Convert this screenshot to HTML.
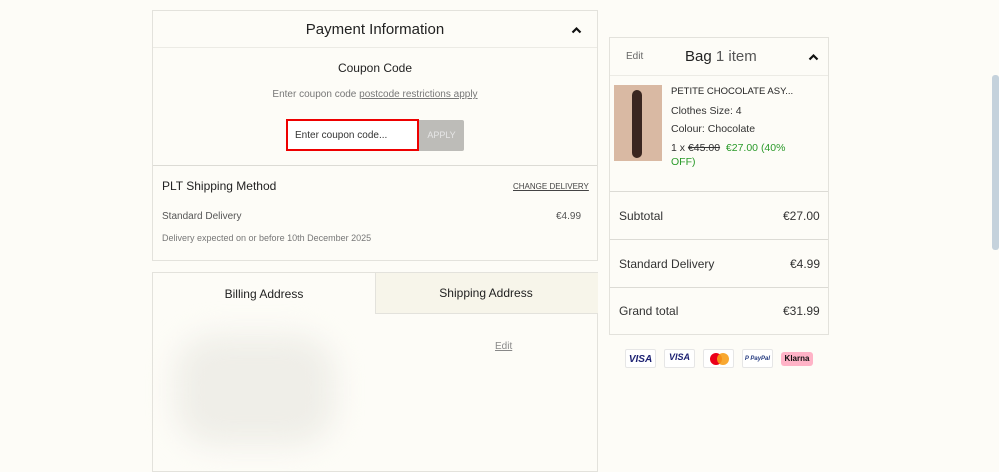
<!DOCTYPE html>
<html><head><style>
body{margin:0;width:999px;height:462px;background:#fdfcf7;font-family:"Liberation Sans",sans-serif;color:#222;position:relative;overflow:hidden}
.a{position:absolute}
.box{position:absolute;border:1px solid #e3e2dc;box-sizing:border-box}
.hl{position:absolute;height:1px;background:#dcdbd5}
.t{position:absolute;white-space:nowrap}
.pi{position:absolute;top:349px;width:31px;height:19px;border:1px solid #e6e6e6;background:#fff;border-radius:2px;font-size:9px;font-weight:bold;font-style:italic;color:#1a1f71;text-align:center;line-height:19px;box-sizing:border-box}
</style></head><body>
<div class="box" style="left:152px;top:10px;width:446px;height:251px"></div>
<div class="hl" style="left:153px;top:47px;width:444px;background:#ecebe5"></div>
<div class="t" style="left:152px;width:446px;top:21px;text-align:center;font-size:15px">Payment Information</div>
<svg class="a" style="left:571px;top:26px" width="11" height="8"><path d="M1.5 6.5 L5.5 2.5 L9.5 6.5" stroke="#111" stroke-width="2.2" fill="none"/></svg>
<div class="t" style="left:152px;width:446px;top:61px;text-align:center;font-size:12px">Coupon Code</div>
<div class="t" style="left:152px;width:446px;top:89px;text-align:center;font-size:10px;color:#777">Enter coupon code <span style="text-decoration:underline">postcode restrictions apply</span></div>
<div class="a" style="left:286px;top:119px;width:133px;height:32px;border:2px solid #e00;box-sizing:border-box;background:#fff"></div>
<div class="t" style="left:295px;top:130px;font-size:10px;color:#333">Enter coupon code...</div>
<div class="a" style="left:419px;top:120px;width:45px;height:31px;background:#bdbcb8;border-radius:0 2px 2px 0;color:#e6e6e6;font-size:9px;text-align:center;line-height:31px">APPLY</div>
<div class="hl" style="left:153px;top:165px;width:444px"></div>
<div class="t" style="left:162px;top:179px;font-size:12px">PLT Shipping Method</div>
<div class="t" style="left:513px;top:182px;font-size:8px;color:#444;text-decoration:underline">CHANGE DELIVERY</div>
<div class="t" style="left:162px;top:211px;font-size:10px;color:#555">Standard Delivery</div>
<div class="t" style="left:556px;top:211px;font-size:10px;color:#555">€4.99</div>
<div class="t" style="left:162px;top:233px;font-size:9px;color:#777">Delivery expected on or before 10th December 2025</div>

<div class="box" style="left:152px;top:272px;width:446px;height:200px"></div>
<div class="a" style="left:375px;top:273px;width:222px;height:40px;background:#f7f5ea;border-left:1px solid #e3e2dc;border-bottom:1px solid #e3e2dc"></div>
<div class="t" style="left:153px;width:222px;top:287px;text-align:center;font-size:12px">Billing Address</div>
<div class="t" style="left:375px;width:222px;top:286px;text-align:center;font-size:12px">Shipping Address</div>
<div class="t" style="left:495px;top:341px;font-size:10px;color:#888;text-decoration:underline">Edit</div>
<div class="a" style="left:175px;top:335px;width:160px;height:110px;background:#efeee8;border-radius:40px;filter:blur(14px)"></div>

<div class="box" style="left:609px;top:37px;width:220px;height:298px"></div>
<div class="t" style="left:626px;top:51px;font-size:10px;color:#666">Edit</div>
<div class="t" style="left:685px;top:48px;font-size:15px">Bag <span style="color:#555">1 item</span></div>
<svg class="a" style="left:808px;top:53px" width="11" height="8"><path d="M1.5 6.5 L5.5 2.5 L9.5 6.5" stroke="#111" stroke-width="2.2" fill="none"/></svg>
<div class="hl" style="left:610px;top:75px;width:218px;background:#ecebe5"></div>
<div class="a" style="left:614px;top:85px;width:48px;height:76px;background:#d9b9a3"></div>
<div class="a" style="left:632px;top:90px;width:10px;height:68px;background:#3a2620;border-radius:5px"></div>
<div class="t" style="left:671px;top:86px;font-size:9.5px">PETITE CHOCOLATE ASY...</div>
<div class="t" style="left:671px;top:105px;font-size:10.5px;color:#333">Clothes Size: 4</div>
<div class="t" style="left:671px;top:123px;font-size:10.5px;color:#333">Colour: Chocolate</div>
<div class="t" style="left:671px;top:141px;font-size:10.5px;color:#333;line-height:14px">1 x <s>€45.00</s> &nbsp;<span style="color:#2a9a2a">€27.00 (40%</span><br><span style="color:#2a9a2a">OFF)</span></div>
<div class="hl" style="left:610px;top:191px;width:218px"></div>
<div class="t" style="left:619px;top:209px;font-size:12px;color:#333">Subtotal</div>
<div class="t" style="left:783px;top:209px;font-size:12px;color:#333">€27.00</div>
<div class="hl" style="left:610px;top:239px;width:218px"></div>
<div class="t" style="left:619px;top:257px;font-size:12px;color:#333">Standard Delivery</div>
<div class="t" style="left:790px;top:257px;font-size:12px;color:#333">€4.99</div>
<div class="hl" style="left:610px;top:287px;width:218px"></div>
<div class="t" style="left:619px;top:304px;font-size:12px;color:#333">Grand total</div>
<div class="t" style="left:783px;top:304px;font-size:12px;color:#333">€31.99</div>

<div class="pi" style="left:625px;font-size:10px">VISA</div>
<div class="pi" style="left:664px;line-height:15px">VISA</div>
<div class="pi" style="left:703px"><span class="a" style="left:6px;top:3px;width:12px;height:12px;border-radius:50%;background:#eb001b"></span><span class="a" style="left:13px;top:3px;width:12px;height:12px;border-radius:50%;background:#f79e1b;opacity:.9"></span></div>
<div class="pi" style="left:742px;font-size:6px;color:#253b80">P PayPal</div>
<div class="a" style="left:781px;top:352px;width:32px;height:14px;background:#ffb3c7;border-radius:3px;font-size:8px;font-weight:bold;text-align:center;line-height:14px;color:#111">Klarna</div>

<div class="a" style="left:992px;top:75px;width:7px;height:175px;background:#c5d2dc;border-radius:3px"></div>
</body></html>
